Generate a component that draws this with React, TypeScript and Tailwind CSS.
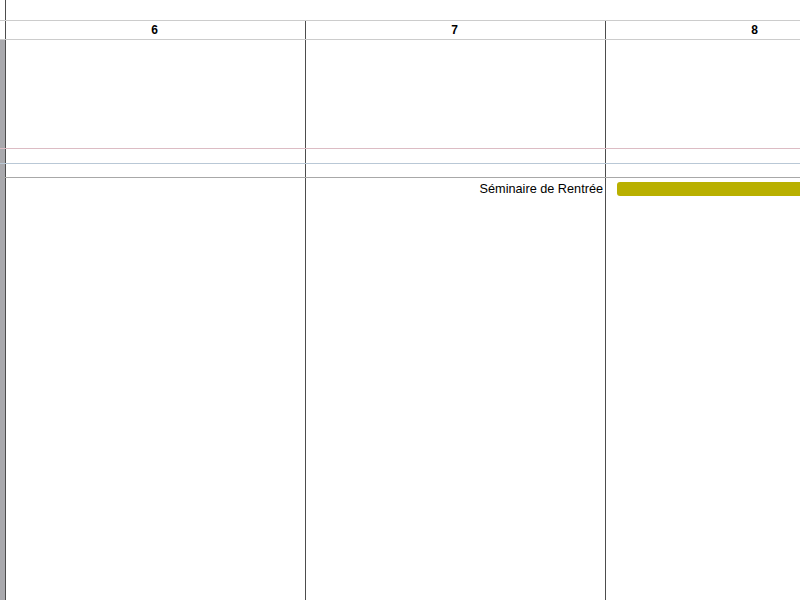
const days = ["6", "7", "8"];

function Gutter({ shaded }: { shaded?: boolean }) {
  return <div className={shaded ? "w-[5px] shrink-0 bg-[#a9a9ad]" : "w-[5px] shrink-0 bg-white"} />;
}

export default function App() {
  return (
    <div
      className="w-[800px] h-[600px] overflow-hidden bg-white flex flex-col text-black"
      style={{ fontFamily: '"Liberation Sans", Arial, sans-serif' }}
    >
      {/* top blank strip */}
      <div className="flex h-[20px] shrink-0">
        <Gutter />
        <div className="flex-1 border-l border-l-[#4d4d4d]" />
      </div>

      {/* day numbers */}
      <div className="flex h-[20px] shrink-0 border-y border-y-[#cccccc]">
        <Gutter />
        {days.map((d) => (
          <div
            key={d}
            className="w-[300px] shrink-0 border-l border-l-[#4d4d4d] flex items-center justify-center pr-[2px] text-[12px] font-bold leading-none"
          >
            {d}
          </div>
        ))}
      </div>

      {/* all-day area */}
      <div className="flex h-[109px] shrink-0 border-b border-b-[#dcbcc4]">
        <Gutter shaded />
        {days.map((d) => (
          <div key={d} className="w-[300px] shrink-0 border-l border-l-[#4d4d4d]" />
        ))}
      </div>
      <div className="flex h-[15px] shrink-0 border-b border-b-[#b9c8d6]">
        <Gutter shaded />
        {days.map((d) => (
          <div key={d} className="w-[300px] shrink-0 border-l border-l-[#4d4d4d]" />
        ))}
      </div>
      <div className="flex h-[14px] shrink-0 border-b border-b-[#a8a8a8]">
        <Gutter shaded />
        {days.map((d) => (
          <div key={d} className="w-[300px] shrink-0 border-l border-l-[#4d4d4d]" />
        ))}
      </div>

      {/* events */}
      <div className="flex flex-1">
        <Gutter shaded />
        <div className="w-[300px] shrink-0 border-l border-l-[#4d4d4d]" />
        <div className="w-[300px] shrink-0 border-l border-l-[#4d4d4d] flex justify-end pt-[3px] pr-[2px]">
          <span className="text-[12.7px] leading-[16px]">Séminaire de Rentrée</span>
        </div>
        <div className="w-[300px] shrink-0 border-l border-l-[#4d4d4d] pl-[11px] pt-[4px]">
          <div className="h-[14px] w-full rounded-[3px] bg-[#b9b000]" />
        </div>
      </div>
    </div>
  );
}
